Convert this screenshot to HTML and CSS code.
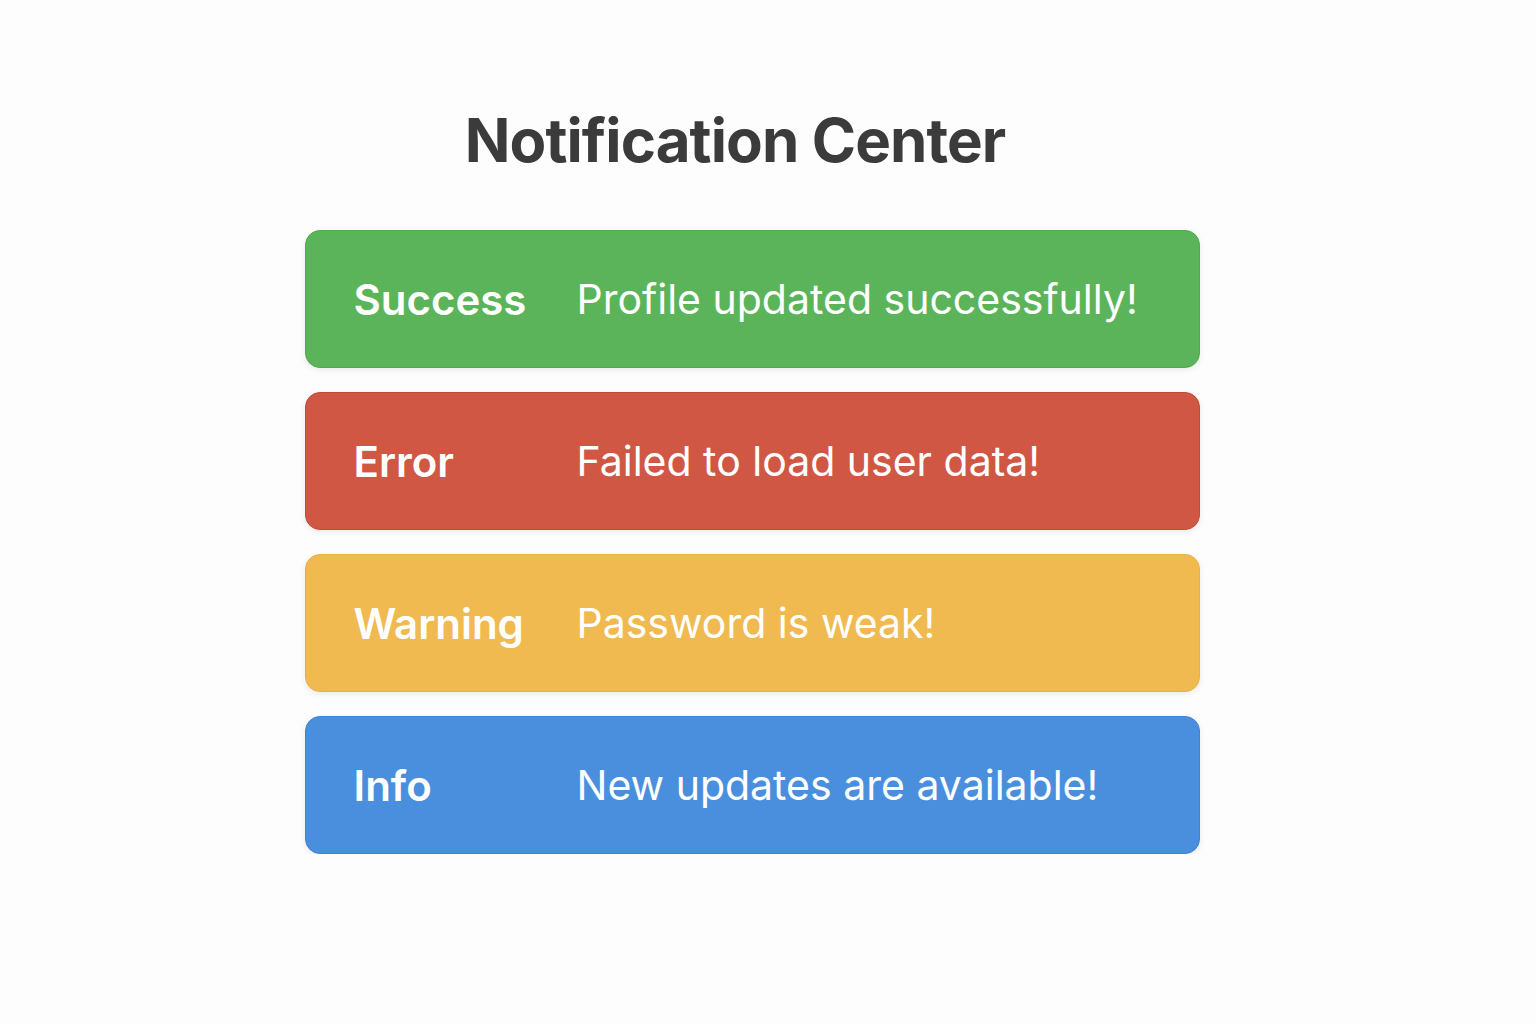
FILE: index.html
```html
<!DOCTYPE html>
<html lang="en">
<head>
<meta charset="utf-8">
<title>Notification Center</title>
<link rel="stylesheet" href="styles.css">
</head>
<body>
<main class="page">
  <h1 class="title">Notification Center</h1>
  <section class="list">
    <div class="note note-success"><span class="label">Success</span><span class="msg">Profile updated successfully!</span></div>
    <div class="note note-error"><span class="label">Error</span><span class="msg">Failed to load user data!</span></div>
    <div class="note note-warning"><span class="label">Warning</span><span class="msg">Password is weak!</span></div>
    <div class="note note-info"><span class="label">Info</span><span class="msg">New updates are available!</span></div>
  </section>
</main>
</body>
</html>
```
FILE: styles.css
```css
html, body {
  margin: 0;
  padding: 0;
  background: #fdfdfd;
}
body {
  font-family: Inter, "Open Sans", "Liberation Sans", sans-serif;
  color: #fff;
}
.page {
  display: flex;
  flex-direction: column;
  align-items: center;
  padding-top: 102px;
}
.title {
  margin: 0 66px 52px 0;
  font-size: 60px;
  font-weight: 700;
  color: #3b3b3b;
  letter-spacing: -0.9px;
  line-height: 76px;
}
.list {
  display: flex;
  flex-direction: column;
  gap: 24px;
  width: 895px;
  margin-right: 32px;
}
.note {
  box-sizing: border-box;
  height: 138px;
  border-radius: 15px;
  display: flex;
  align-items: center;
  padding-left: 48px;
  box-shadow: 0 2px 6px rgba(0,0,0,0.08);
  font-size: 41px;
}
.label {
  width: 223px;
  font-weight: 600;
  font-size: 42px;
  flex-shrink: 0;
}
.msg {
  font-weight: 400;
}
.note-success { background: #5bb45a; border: 1px solid #4eaa4d; }
.note-error { background: #d05744; border: 1px solid #c44b39; }
.note-warning { background: #f0ba50; border: 1px solid #ebb13f; }
.note-info { background: #4a8fdd; border: 1px solid #3f84d4; }
```
